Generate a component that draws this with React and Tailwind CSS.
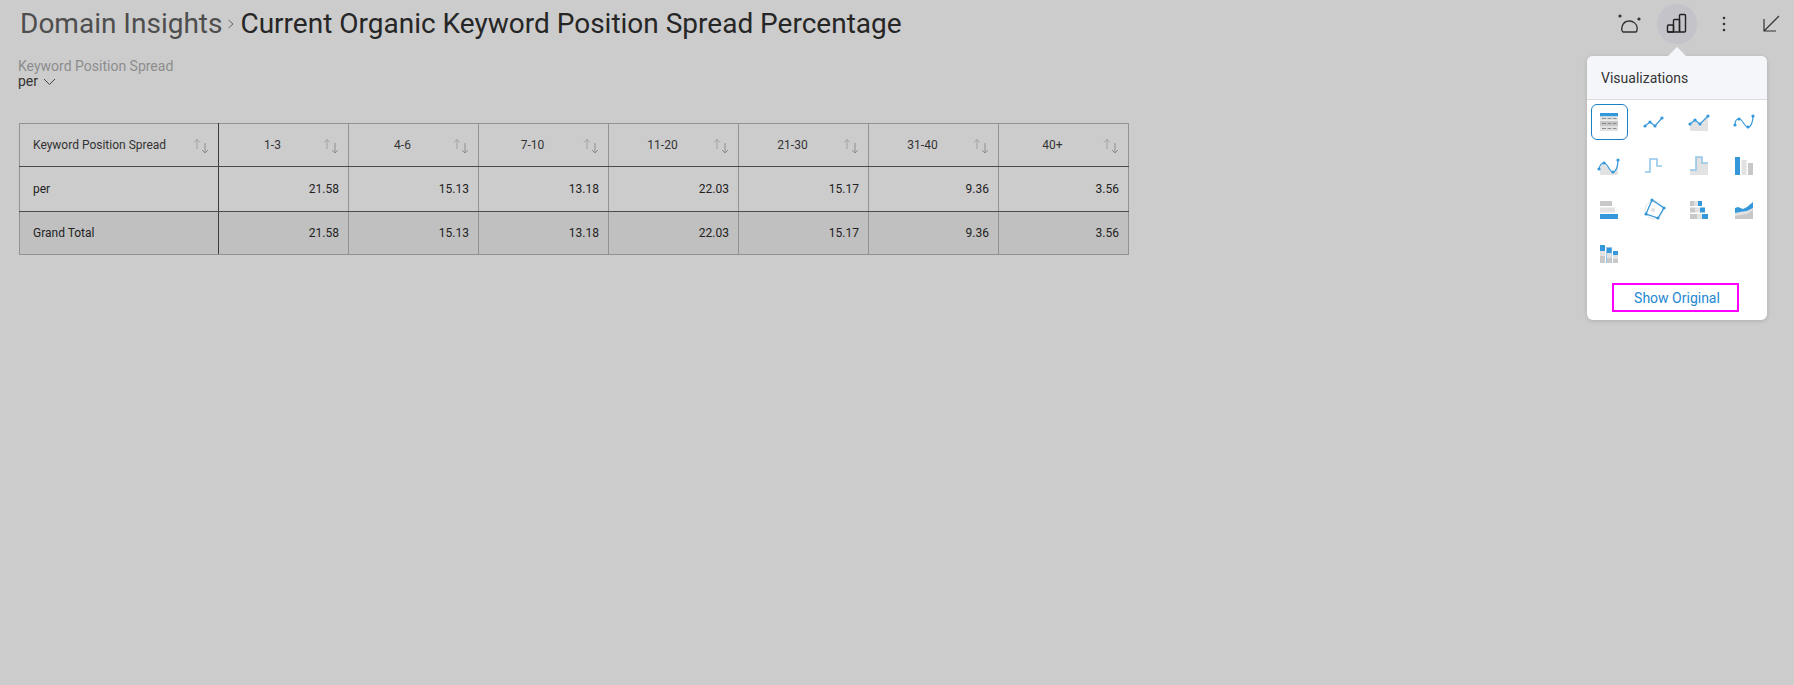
import React from 'react';

const BLUE = '#3498db';
const LIGHT_BLUE = '#93c6ea';
const GRAY = '#e2e2e2';
const MID = '#c8c8c8';

const columns = ['1-3', '4-6', '7-10', '11-20', '21-30', '31-40', '40+'];
const values = ['21.58', '15.13', '13.18', '22.03', '15.17', '9.36', '3.56'];

const Dots = ({ points }) => points.map(([x, y]) => <circle key={`${x}-${y}`} cx={x} cy={y} r="1.6" fill={BLUE} />);

const vizIcons = [
  // grid
  <>
    <rect x="0" y="0" width="18" height="3.5" fill={BLUE} />
    <rect x="0" y="3.5" width="18" height="4" fill={GRAY} />
    <rect x="0" y="8" width="18" height="5" fill={MID} />
    <rect x="0" y="13" width="18" height="5" fill={GRAY} />
    <path d="M2 5.5h4M7.5 5.5h4M13 5.5h3.5M2 10.5h4M7.5 10.5h4M13 10.5h3.5M2 15.5h4M7.5 15.5h4M13 15.5h3.5" stroke="#777" strokeWidth="0.8" />
  </>,
  // line
  <>
    <path d="M0 13 L5 9 L10 13 L17 5" fill="none" stroke={BLUE} strokeWidth="1.2" />
    <Dots points={[[0, 13], [5, 9], [10, 13], [17, 5]]} />
  </>,
  // area
  <>
    <path d="M0 11 L5 7 L10 11 L18 3 V18 H0 Z" fill={GRAY} />
    <path d="M0 11 L5 7 L10 11 L18 3" fill="none" stroke={BLUE} strokeWidth="1.2" />
    <Dots points={[[0, 11], [5, 7], [10, 11], [18, 3]]} />
  </>,
  // spline
  <>
    <path d="M0 12 C0 7 2 6 4 6 C8 6 9 14 13 14 C16 14 18 9 18 3" fill="none" stroke={BLUE} strokeWidth="1.2" />
    <Dots points={[[0, 12], [4, 6], [13, 14], [18, 3]]} />
  </>,
  // spline area
  <>
    <path d="M0 11 C1 7 2 6 4 6 C8 6 9 15 13 15 C16 15 18 9 18 3 V18 H0 Z" fill={GRAY} />
    <path d="M-1 12 C0 7 2 6 4 6 C8 6 9 15 13 15 C16 15 18 9 18 3" fill="none" stroke={BLUE} strokeWidth="1.2" />
    <Dots points={[[-1, 12], [4, 6], [13, 15], [18, 3]]} />
  </>,
  // step
  <path d="M0 15 H5 V2 H12 V9 H17" fill="none" stroke={LIGHT_BLUE} strokeWidth="1.6" />,
  // step area
  <>
    <path d="M0 13 H6 V0 H12 V6 H18 V18 H0 Z" fill={GRAY} />
    <path d="M0 13 H6 V0 H12 V6 H18" fill="none" stroke={LIGHT_BLUE} strokeWidth="1.6" />
  </>,
  // bar
  <>
    <rect x="0" y="0" width="5" height="18" fill={BLUE} />
    <rect x="6.5" y="3" width="5" height="15" fill={GRAY} />
    <rect x="13" y="6" width="5" height="12" fill={MID} />
  </>,
  // horizontal bar
  <>
    <rect x="0" y="0" width="12" height="5" fill={MID} />
    <rect x="0" y="6.5" width="15" height="5" fill={GRAY} />
    <rect x="0" y="13" width="18" height="5" fill={BLUE} />
  </>,
  // radar
  <>
    <circle cx="9" cy="9" r="9" fill="none" stroke={GRAY} strokeWidth="1" />
    <circle cx="8" cy="9" r="2" fill={GRAY} />
    <path d="M7 -1 L19 7 L13 17 L1 13 Z" fill="none" stroke={BLUE} strokeWidth="1.3" />
    <Dots points={[[7, -1], [19, 7], [13, 17], [1, 13]]} />
  </>,
  // stacked horizontal bar
  <>
    <rect x="0" y="0" width="4" height="5" fill={MID} />
    <rect x="4" y="0" width="4" height="5" fill={GRAY} />
    <rect x="8" y="0" width="4" height="5" fill={BLUE} />
    <rect x="0" y="6.5" width="5" height="5" fill={MID} />
    <rect x="5" y="6.5" width="5" height="5" fill={GRAY} />
    <rect x="10" y="6.5" width="5" height="5" fill={BLUE} />
    <rect x="0" y="13" width="7" height="5" fill={MID} />
    <rect x="7" y="13" width="5" height="5" fill={GRAY} />
    <rect x="12" y="13" width="6" height="5" fill={BLUE} />
  </>,
  // stacked area
  <>
    <path d="M0 14 L5 13 L12 12 L18 8 V18 H0 Z" fill={MID} />
    <path d="M0 11 L5 11 L12 10 L18 6 V9 L12 13 L5 14 L0 15 Z" fill={GRAY} />
    <path d="M0 7 L3 6 L8 8 L12 6 L18 1 V7 L12 10 L5 11 L0 12 Z" fill={BLUE} />
  </>,
  // stacked bar
  <>
    <rect x="0" y="0" width="5" height="6" fill={BLUE} />
    <rect x="0" y="6" width="5" height="5" fill={GRAY} />
    <rect x="0" y="11" width="5" height="7" fill={MID} />
    <rect x="6" y="2" width="6" height="16" fill={LIGHT_BLUE} />
    <rect x="7" y="3" width="4.5" height="5" fill={BLUE} />
    <rect x="7" y="8" width="4.5" height="5" fill={GRAY} />
    <rect x="7" y="13" width="4.5" height="5" fill={MID} />
    <rect x="13" y="6" width="5" height="4" fill={BLUE} />
    <rect x="13" y="10" width="5" height="4" fill={GRAY} />
    <rect x="13" y="14" width="5" height="4" fill={MID} />
  </>,
];

const SortIcon = () => (
  <svg width="16" height="15" viewBox="0 0 16 15" fill="none" className="shrink-0 translate-y-px">
    <path d="M4 10V0.5M1 3.5L4 0.5L7 3.5" stroke="#a2a2a2" strokeWidth="1" />
    <path d="M12 4v10M9 11L12 14l3-3" stroke="#8c8c8c" strokeWidth="1" />
  </svg>
);

const HeaderCell = ({ label, first }) => (
  <th className={`h-[43px] p-0 font-normal border border-[#929292] ${first ? 'border-r-[#3c3c3c]' : ''} border-b-[#4a4a4a]`}>
    <div className="flex items-center pr-[9px]">
      <span className={`flex-1 text-[#333] ${first ? 'pl-[13px] text-left' : 'pl-[3px] text-center'}`}>{label}</span>
      <SortIcon />
    </div>
  </th>
);

const Row = ({ label, total }) => {
  const bg = total ? 'bg-[#c0c0c0]' : '';
  const rowBorder = total ? 'border-b-[#929292]' : 'border-b-[#4a4a4a]';
  return (
    <tr className={total ? 'h-[43px]' : 'h-[45px]'}>
      <td className={`p-0 pl-[13px] border border-[#929292] border-r-[#3c3c3c] ${rowBorder} ${bg}`}>{label}</td>
      {values.map((v, i) => (
        <td key={i} className={`p-0 pr-[9px] text-right border border-[#929292] ${rowBorder} ${bg}`}>{v}</td>
      ))}
    </tr>
  );
};

const App = () => {
  return (
    <div className="relative h-[685px] w-[1794px] overflow-hidden bg-[#cccccc] font-['Roboto',sans-serif]">
      {/* Title bar */}
      <div className="flex h-[47px] items-center justify-between pl-[20px] pr-[14px]">
        <div className="flex items-center text-[28px] leading-[48px] text-[#262626]">
          <span className="text-[#4e4e4e]">Domain Insights</span>
          <svg width="8" height="10" viewBox="0 0 8 10" fill="none" className="mx-[5px]">
            <path d="M1.5 1L6 5 1.5 9" stroke="#666" strokeWidth="1" />
          </svg>
          <span>Current Organic Keyword Position Spread Percentage</span>
        </div>
        <div className="flex items-center text-[#333]">
          <svg width="24" height="24" viewBox="0 0 24 24" fill="none" className="mr-[15px]">
            <path d="M5 20c-1.5-1-1.5-3-1-5 .8-3.5 3.5-6 7.5-6s7 3 7.5 6c.3 2 .3 4-1 5H5Z" stroke="#333" strokeWidth="1.3" />
            <circle cx="2" cy="4" r="1.6" fill="#333" />
            <circle cx="21" cy="7" r="1.6" fill="#333" />
          </svg>
          <div className="flex h-10 w-10 items-center justify-center rounded-full bg-[#c3c3c9]">
            <svg width="24" height="24" viewBox="0 0 24 24" fill="none">
              <rect x="2.5" y="13" width="6" height="7" rx="1" stroke="#222" strokeWidth="1.4" />
              <path d="M8.5 20V8.5a1 1 0 0 1 1-1h4a1 1 0 0 1 1 1V20" stroke="#222" strokeWidth="1.4" />
              <path d="M14.5 20V3.5a1 1 0 0 1 1-1h4a1 1 0 0 1 1 1V19a1 1 0 0 1-1 1H2.5" stroke="#222" strokeWidth="1.4" />
            </svg>
          </div>
          <svg width="4" height="16" viewBox="0 0 4 16" className="ml-[25px] mr-[36px]">
            <circle cx="2" cy="2" r="1.3" fill="#333" />
            <circle cx="2" cy="8" r="1.3" fill="#333" />
            <circle cx="2" cy="14" r="1.3" fill="#333" />
          </svg>
          <svg width="18" height="18" viewBox="0 0 18 18" fill="none">
            <path d="M17 1L2 16M2 4v12h12" stroke="#333" strokeWidth="1.2" />
          </svg>
        </div>
      </div>

      {/* Filter */}
      <div className="ml-[18px] mt-[12px] text-[14px] leading-[15px]">
        <div className="text-[#8c8c8c]">Keyword Position Spread</div>
        <div className="flex items-center text-[#333]">
          per
          <svg width="13" height="8" viewBox="0 0 13 8" fill="none" className="ml-[5px]">
            <path d="M1 1l5.5 5.5L12 1" stroke="#444" strokeWidth="1" />
          </svg>
        </div>
      </div>

      {/* Pivot table */}
      <table className="ml-[19px] mt-[34px] w-[1110px] table-fixed border-collapse text-[12px] text-[#222]">
        <colgroup>
          <col className="w-[199px]" />
          {columns.map((c) => (
            <col key={c} className="w-[130px]" />
          ))}
        </colgroup>
        <thead>
          <tr>
            <HeaderCell label="Keyword Position Spread" first />
            {columns.map((c) => (
              <HeaderCell key={c} label={c} />
            ))}
          </tr>
        </thead>
        <tbody>
          <Row label="per" />
          <Row label="Grand Total" total />
        </tbody>
      </table>

      {/* Visualizations popover */}
      <div className="absolute left-[1587px] top-[56px] w-[180px] rounded-[6px] bg-white shadow-[0_1px_4px_rgba(0,0,0,0.15)]">
        <div className="absolute left-[81px] top-[-9px] h-0 w-0 border-x-[9px] border-b-[9px] border-x-transparent border-b-[#f5f6fa]" />
        <div className="flex h-[44px] items-center rounded-t-[6px] border-b border-[#dcdcdc] bg-[#f5f6fa] pl-[14px] pt-[2px] text-[14px] text-[#333]">
          Visualizations
        </div>
        <div className="grid grid-cols-[repeat(4,45px)] auto-rows-[44px] pt-[4px]">
          {vizIcons.map((icon, i) => (
            <div key={i} className="flex h-[44px] items-start justify-center">
              <div className={`flex h-[36px] w-[37px] items-center justify-center rounded-[6px] border ${i === 0 ? 'border-[#1d7fc7]' : 'border-transparent'}`}>
                <svg width="18" height="18" viewBox="0 0 18 18" className="-translate-x-px overflow-visible">
                  {icon}
                </svg>
              </div>
            </div>
          ))}
        </div>
        <div className="mt-[3px] flex justify-center pb-[8px] pr-[4px]">
          <button type="button" className="h-[29px] w-[127px] border-2 border-[#ff00ff] pl-[4px] pt-px text-[14px] text-[#1e88d2]">
            Show Original
          </button>
        </div>
      </div>
    </div>
  );
};

export default App;
